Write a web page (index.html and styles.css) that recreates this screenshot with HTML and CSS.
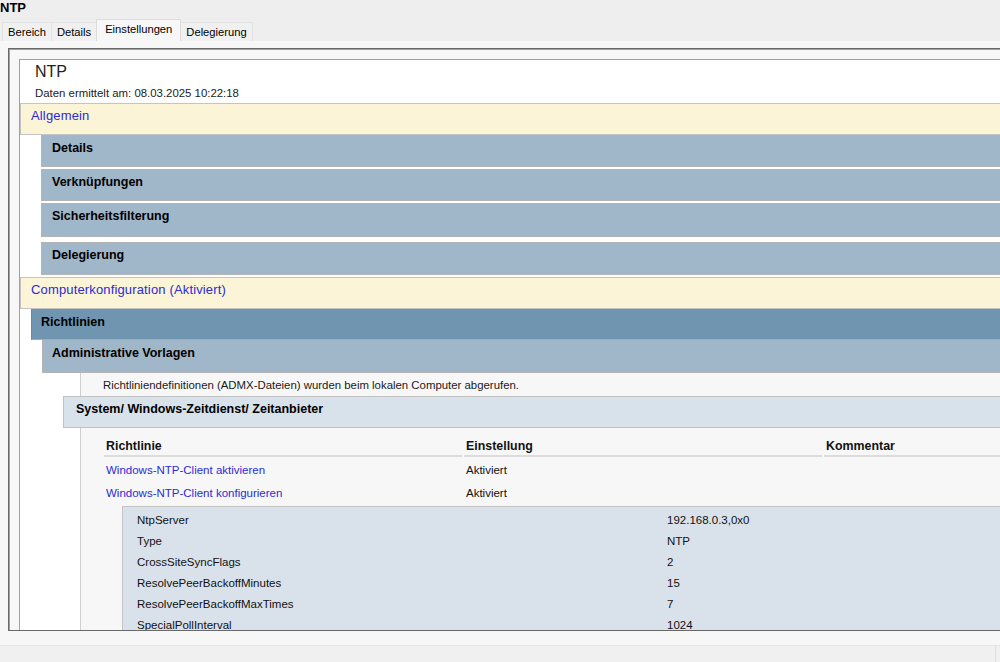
FILE: index.html
```html
<!DOCTYPE html>
<html lang="de">
<head>
<meta charset="utf-8">
<title>NTP</title>
<link rel="stylesheet" href="styles.css">
</head>
<body>
<div class="title">NTP</div>
<div class="tabs">
  <div class="tab">Bereich</div>
  <div class="tab">Details</div>
  <div class="tab active">Einstellungen</div>
  <div class="tab">Delegierung</div>
</div>
<div class="panel">
  <div class="frame">
    <div class="doc">
      <div class="head">
        <div class="h-title">NTP</div>
        <div class="h-date">Daten ermittelt am: 08.03.2025 10:22:18</div>
      </div>
      <div class="sec">Allgemein</div>
      <div class="bar l1 b-details">Details</div>
      <div class="bar l1 b-links">Verknüpfungen</div>
      <div class="bar l1 b-sec">Sicherheitsfilterung</div>
      <div class="bar l1 b-deleg">Delegierung</div>
      <div class="sec sec-comp">Computerkonfiguration (Aktiviert)</div>
      <div class="bar dark">Richtlinien</div>
      <div class="bar l1 admin">Administrative Vorlagen</div>
      <div class="note">Richtliniendefinitionen (ADMX-Dateien) wurden beim lokalen Computer abgerufen.</div>
      <div class="bar light">System/ Windows-Zeitdienst/ Zeitanbieter</div>
      <div class="content">
        <div class="grid">
          <div class="th">Richtlinie</div>
          <div class="th">Einstellung</div>
          <div class="th">Kommentar</div>
          <div class="td link">Windows-NTP-Client aktivieren</div>
          <div class="td">Aktiviert</div>
          <div class="td"></div>
          <div class="td link">Windows-NTP-Client konfigurieren</div>
          <div class="td">Aktiviert</div>
          <div class="td"></div>
          <div class="sub">
            <div class="kv"><span>NtpServer</span><span>192.168.0.3,0x0</span></div>
            <div class="kv"><span>Type</span><span>NTP</span></div>
            <div class="kv"><span>CrossSiteSyncFlags</span><span>2</span></div>
            <div class="kv"><span>ResolvePeerBackoffMinutes</span><span>15</span></div>
            <div class="kv"><span>ResolvePeerBackoffMaxTimes</span><span>7</span></div>
            <div class="kv"><span>SpecialPollInterval</span><span>1024</span></div>
          </div>
        </div>
      </div>
    </div>
  </div>
</div>
<div class="status"><div class="status-div"></div></div>
</body>
</html>
```

FILE: styles.css
```css
html, body {
  margin: 0;
  padding: 0;
  overflow: hidden;
}
body {
  background: #eeeeee;
  font-family: "Liberation Sans", Arial, sans-serif;
  font-size: 12px;
  color: #000;
  width: 1000px;
  height: 662px;
}
.title {
  height: 19px;
  font-size: 13px;
  font-weight: bold;
  line-height: 15px;
}
.tabs {
  display: flex;
  align-items: flex-end;
  height: 22px;
  padding-left: 2px;
}
.tab {
  height: 18px;
  line-height: 18px;
  font-size: 11.2px;
  padding: 0 5px 0 5px;
  border: 1px solid #e2e2e2;
  border-bottom: none;
  margin-right: -1px;
  background: #f0f0f0;
  color: #000;
}
.tab.active {
  height: 21px;
  line-height: 19px;
  padding: 0 8px 0 8px;
  background: #f7f7f7;
  border-color: #dcdcdc;
  position: relative;
  z-index: 1;
}
.panel {
  background: #f7f7f7;
  padding: 7px 0 14px 8px;
}
.frame {
  width: 1100px;
  height: 583px;
  border-top: 1px solid #696969;
  border-left: 1px solid #696969;
  border-bottom: 1px solid #696969;
  box-shadow: inset 1px 1px 0 #a0a0a0;
  padding: 10px 0 0 10px;
  box-sizing: border-box;
  overflow: hidden;
  background: #f7f7f7;
}
.doc {
  background: #fff;
  border-top: 1px solid #a0a0a0;
  border-left: 1px solid #a0a0a0;
  height: 100%;
  box-sizing: border-box;
}
.head {
  height: 43px;
  box-sizing: border-box;
  padding: 2px 0 0 15px;
}
.h-title {
  font-size: 16px;
  line-height: 20px;
  color: #222;
}
.h-date {
  margin-top: 3px;
  line-height: 16px;
  font-size: 11.4px;
  color: #222;
}
.sec {
  background: #fbf4d6;
  border: 1px solid #c4c4c4;
  border-right: none;
  padding: 4px 10px 10px;
  line-height: 16px;
  color: #2b2bd6;
  font-size: 13px;
  letter-spacing: 0.15px;
}
.sec-comp {
  margin-top: 2px;
}
.bar {
  line-height: 16px;
  font-weight: bold;
  font-size: 12.5px;
  color: #000;
}
.l1 {
  margin-left: 21px;
  background: #a0b6c9;
  border: 1px solid #b4b4b4;
  border-right: none;
  padding: 4px 10px 10px;
}
.b-details { border-top: none; padding-top: 5px; }
.b-links { margin-top: 2px; }
.b-sec { margin-top: 2px; padding-bottom: 12px; }
.b-deleg { margin-top: 5px; padding-bottom: 11px; }
.dark {
  margin-left: 11px;
  background: #6f95b0;
  border-left: 1px solid #6a8aa3;
  border-bottom: 1px solid #a9a9a9;
  padding: 5px 9px 9px;
}
.admin {
  margin-left: 22px;
  border-top: none;
  padding: 5px 9px 11px;
}
.note {
  margin-left: 60px;
  border-left: 1px solid #cfcfcf;
  background: #f7f7f7;
  padding: 4px 0 3px 22px;
  line-height: 16px;
  font-size: 11.4px;
  color: #1a1a1a;
}
.light {
  margin-left: 43px;
  background: #d8e2ea;
  border: 1px solid #c2c2c2;
  border-right: none;
  padding: 4px 12px 10px;
}
.content {
  margin-left: 60px;
  border-left: 1px solid #cfcfcf;
  background: #f7f7f7;
  height: 400px;
  padding: 10px 0 0 23px;
}
.grid {
  display: grid;
  grid-template-columns: 358px 358px 300px;
  column-gap: 2px;
}
.th {
  font-weight: bold;
  font-size: 12.4px;
  line-height: 16px;
  padding: 0 2px 1px;
  border-bottom: 2px solid #dcdcdc;
  color: #111;
}
.td {
  line-height: 16px;
  padding: 5px 2px 2px;
  font-size: 11.5px;
  color: #111;
}
.td.link {
  color: #2b2bd6;
}
.sub {
  grid-column: 1 / -1;
  margin: 3px 0 0 18px;
  background: #d9e2ea;
  border-top: 1px solid #c4c4c4;
  border-left: 1px solid #c4c4c4;
  padding: 3px 0 0 14px;
}
.kv {
  display: grid;
  grid-template-columns: 530px 1fr;
  line-height: 21px;
  font-size: 11.5px;
  color: #111;
}
.status {
  height: 16px;
  border-top: 1px solid #e3e3e3;
  background: #f0f0f0;
  display: flex;
  justify-content: flex-end;
}
.status-div {
  width: 4px;
  border-left: 1px solid #dedede;
}
```
